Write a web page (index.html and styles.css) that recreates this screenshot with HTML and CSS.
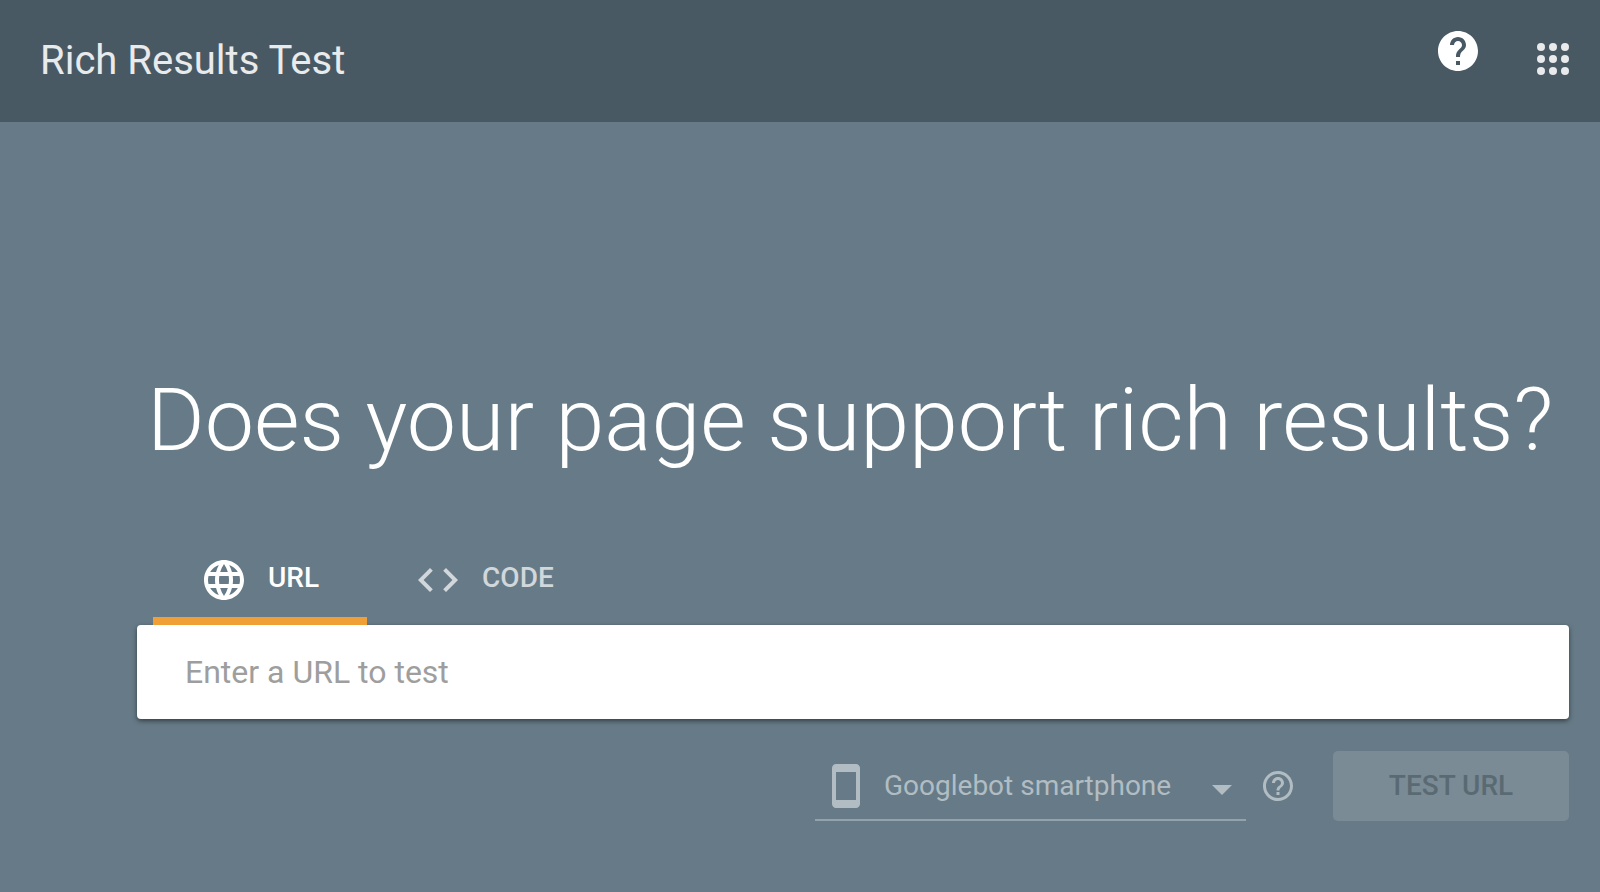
FILE: index.html
```html
<!DOCTYPE html>
<html lang="en">
<head>
    <meta charset="UTF-8">
    <meta name="viewport" content="width=device-width, initial-scale=1.0">
    <title>Rich Results Test</title>
    <link rel="stylesheet" href="styles.css">
</head>
<body>
    <header class="header">
        <a class="header-title" href="#">Rich Results Test</a>
        <div class="header-actions">
            <button class="icon-button help-button" type="button" aria-label="Help">
                <svg class="icon" viewBox="0 0 24 24"><path d="M12 2C6.48 2 2 6.48 2 12s4.48 10 10 10 10-4.48 10-10S17.52 2 12 2zm1 17h-2v-2h2v2zm2.07-7.75l-.9.92C13.45 12.9 13 13.5 13 15h-2v-.5c0-1.1.45-2.1 1.17-2.83l1.24-1.26c.37-.36.59-.86.59-1.41 0-1.1-.9-2-2-2s-2 .9-2 2H8c0-2.21 1.79-4 4-4s4 1.79 4 4c0 .88-.36 1.68-.93 2.25z"/></svg>
            </button>
            <button class="icon-button apps-button" type="button" aria-label="Apps">
                <svg class="icon" viewBox="0 0 24 24">
                    <circle cx="6" cy="6" r="2"/><circle cx="12" cy="6" r="2"/><circle cx="18" cy="6" r="2"/>
                    <circle cx="6" cy="12" r="2"/><circle cx="12" cy="12" r="2"/><circle cx="18" cy="12" r="2"/>
                    <circle cx="6" cy="18" r="2"/><circle cx="12" cy="18" r="2"/><circle cx="18" cy="18" r="2"/>
                </svg>
            </button>
        </div>
    </header>

    <main class="content">
        <h1 class="headline">Does your page support rich results?</h1>

        <div class="tabs" role="tablist">
            <button class="tab active" type="button" role="tab" aria-selected="true">
                <svg class="icon" viewBox="0 0 24 24"><path d="M11.99 2C6.47 2 2 6.48 2 12s4.47 10 9.99 10C17.52 22 22 17.52 22 12S17.52 2 11.99 2zm6.93 6h-2.95c-.32-1.25-.78-2.45-1.38-3.56 1.84.63 3.37 1.91 4.33 3.56zM12 4.04c.83 1.2 1.48 2.53 1.91 3.96h-3.82c.43-1.43 1.08-2.76 1.91-3.96zM4.26 14C4.1 13.36 4 12.69 4 12s.1-1.36.26-2h3.38c-.08.66-.14 1.32-.14 2s.06 1.34.14 2H4.26zm.82 2h2.95c.32 1.25.78 2.45 1.38 3.56-1.84-.63-3.37-1.9-4.33-3.56zm2.95-8H5.08c.96-1.66 2.49-2.93 4.33-3.56C8.81 5.55 8.35 6.75 8.03 8zM12 19.96c-.83-1.2-1.48-2.53-1.91-3.96h3.82c-.43 1.43-1.08 2.76-1.91 3.96zM14.34 14H9.66c-.09-.66-.16-1.32-.16-2s.07-1.35.16-2h4.68c.09.65.16 1.32.16 2s-.07 1.34-.16 2zm.25 5.56c.6-1.11 1.06-2.31 1.38-3.56h2.95c-.96 1.65-2.49 2.93-4.33 3.56zM16.36 14c.08-.66.14-1.32.14-2s-.06-1.34-.14-2h3.38c.16.64.26 1.31.26 2s-.1 1.36-.26 2h-3.38z"/></svg>
                <span class="tab-label">URL</span>
            </button>
            <button class="tab" type="button" role="tab" aria-selected="false">
                <svg class="icon" viewBox="0 0 24 24"><path d="M9.4 16.6L4.8 12l4.6-4.6L8 6l-6 6 6 6 1.4-1.4zm5.2 0l4.6-4.6-4.6-4.6L16 6l6 6-6 6-1.4-1.4z"/></svg>
                <span class="tab-label">CODE</span>
            </button>
        </div>

        <form id="testForm">
            <input class="url-input" type="text" id="url" name="url" placeholder="Enter a URL to test" aria-label="Enter a URL to test">

            <div class="actions">
                <div class="agent">
                    <label class="agent-label" for="agent" aria-label="User agent">
                        <svg class="icon" viewBox="0 0 24 24"><path d="M17 1.01L7 1c-1.1 0-2 .9-2 2v18c0 1.1.9 2 2 2h10c1.1 0 2-.9 2-2V3c0-1.1-.9-1.99-2-1.99zM17 19H7V5h10v14z"/></svg>
                    </label>
                    <select class="agent-select" id="agent" name="agent">
                        <option>Googlebot smartphone</option>
                    </select>
                    <svg class="arrow" viewBox="0 0 20 10"><path d="M0 0h20L10 10z"/></svg>
                </div>
                <button class="icon-button agent-help" type="button" aria-label="About user agents">
                    <svg class="icon icon-small" viewBox="0 0 24 24"><path d="M11 18h2v-2h-2v2zm1-16C6.48 2 2 6.48 2 12s4.48 10 10 10 10-4.48 10-10S17.52 2 12 2zm0 18c-4.41 0-8-3.59-8-8s3.59-8 8-8 8 3.59 8 8-3.59 8-8 8zm0-14c-2.21 0-4 1.79-4 4h2c0-1.1.9-2 2-2s2 .9 2 2c0 2-3 1.75-3 5h2c0-2.25 3-2.5 3-5 0-2.21-1.79-4-4-4z"/></svg>
                </button>
                <button class="submit" type="submit" disabled>TEST URL</button>
            </div>
        </form>
    </main>
</body>
</html>
```
FILE: styles.css
```css
* {
    box-sizing: border-box;
}
body {
    margin: 0;
    font-family: Roboto, Arial, sans-serif;
    background-color: #667b87;
    color: white;
}
button,
input,
select {
    font-family: inherit;
}
button {
    padding: 0;
    border: none;
    background: none;
    color: inherit;
}
.icon {
    display: block;
    width: 48px;
    height: 48px;
    fill: currentColor;
}
.icon-small {
    width: 36px;
    height: 36px;
}
.header {
    display: flex;
    align-items: center;
    justify-content: space-between;
    height: 122px;
    padding: 0 23px 4px 40px;
    background-color: #495963;
}
.header-title {
    padding-top: 4px;
    font-size: 40px;
    line-height: 48px;
    color: #e8eaec;
    text-decoration: none;
}
.header-actions {
    display: flex;
    align-items: center;
    gap: 47px;
}
.help-button {
    margin-bottom: 16px;
}
.apps-button {
    color: #e8eaec;
}
.content {
    padding: 246px 31px 40px 137px;
}
.headline {
    margin: 0;
    padding-left: 10px;
    font-size: 88px;
    font-weight: 300;
    line-height: 104px;
    white-space: nowrap;
}
.tabs {
    display: flex;
    margin-top: 62px;
    padding-left: 16px;
}
.tab {
    display: flex;
    align-items: center;
    gap: 20px;
    height: 91px;
    padding: 8px 48px 0 47px;
    border-bottom: 8px solid transparent;
    color: #d1d7db;
    font-size: 28px;
    font-weight: 500;
}
.tab.active {
    border-bottom-color: #f09f36;
    color: white;
}
.tab-label {
    padding-bottom: 4px;
}
.url-input {
    display: block;
    width: 100%;
    height: 94px;
    padding: 0 48px;
    border: none;
    border-radius: 4px;
    background: white;
    box-shadow: 0 2px 5px rgba(0, 0, 0, 0.5);
    color: #212121;
    font-size: 32px;
}
.url-input::placeholder {
    color: #9e9e9e;
}
.actions {
    display: flex;
    justify-content: flex-end;
    margin-top: 32px;
}
.agent {
    display: flex;
    align-items: center;
    width: 431px;
    height: 70px;
    padding: 2px 14px 0 7px;
    border-bottom: 2px solid #94a3ab;
    color: #b2bdc3;
}
.agent-select {
    flex: 1;
    appearance: none;
    height: 64px;
    margin-left: 14px;
    padding-bottom: 2px;
    border: none;
    background: none;
    color: inherit;
    font-size: 28px;
}
.arrow {
    width: 20px;
    height: 10px;
    margin-top: 8px;
    fill: currentColor;
}
.agent-help {
    margin: 0 37px 0 14px;
    color: #b2bdc3;
}
.submit {
    width: 236px;
    height: 70px;
    padding-bottom: 2px;
    border-radius: 5px;
    background-color: #7a8b96;
    color: #596a72;
    font-size: 28px;
    font-weight: 500;
}
```
